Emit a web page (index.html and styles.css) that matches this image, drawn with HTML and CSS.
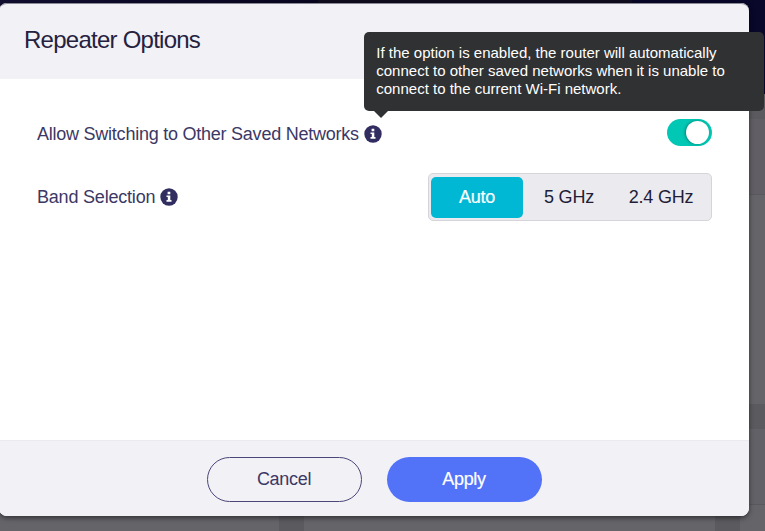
FILE: index.html
```html
<!DOCTYPE html>
<html lang="en">
<head>
<meta charset="utf-8">
<title>Repeater Options</title>
<link rel="stylesheet" href="styles.css">
</head>
<body>
<div class="page">
  <div class="backdrop">
    <div class="topbar"><div class="topbar-panel"></div></div>
    <div class="cards">
      <div class="card card-wide"></div>
      <div class="card card-side"><div class="card-head"></div></div>
      <div class="card"></div>
      <div class="card"></div>
      <div class="card card-last"><div class="card-head"></div></div>
    </div>
  </div>
  <section class="modal" role="dialog">
    <header class="modal-header"><h1>Repeater Options</h1></header>
    <div class="modal-body">
      <div class="row">
        <div class="label"><span class="label-long">Allow Switching to Other Saved Networks</span>
          <span class="info">
            <svg viewBox="0 0 18 18" width="18" height="18"><circle cx="9" cy="9" r="8.7" fill="#312d61"/><path d="M7.6 3.8h2.7v2.5H7.6zM6.5 7.4h3.8v4.7h1.2v1.6h-5v-1.6h1.3V9H6.5z" fill="#fff"/></svg>
            <span class="tooltip">If the option is enabled, the router will automatically<br>connect to other saved networks when it is unable to<br>connect to the current Wi-Fi network.</span>
          </span>
        </div>
        <div class="switch"><div class="knob"></div></div>
      </div>
      <div class="row row-band">
        <div class="label"><span>Band Selection</span>
          <span class="info">
            <svg viewBox="0 0 18 18" width="18" height="18"><circle cx="9" cy="9" r="8.7" fill="#312d61"/><path d="M7.6 3.8h2.7v2.5H7.6zM6.5 7.4h3.8v4.7h1.2v1.6h-5v-1.6h1.3V9H6.5z" fill="#fff"/></svg>
          </span>
        </div>
        <div class="segments">
          <div class="segment active">Auto</div>
          <div class="segment">5 GHz</div>
          <div class="segment">2.4 GHz</div>
        </div>
      </div>
    </div>
    <footer class="modal-footer">
      <button class="btn cancel">Cancel</button>
      <button class="btn apply">Apply</button>
    </footer>
  </section>
</div>
</body>
</html>
```
FILE: styles.css
```css
* { box-sizing: border-box; }
body {
  margin: 0;
  overflow: hidden;
  font-family: "Liberation Sans", Arial, sans-serif;
}
.page {
  position: relative;
  width: 765px;
  height: 531px;
  overflow: hidden;
  background: #5b5a5f;
}
.topbar {
  height: 94px;
  padding: 0 133px 0 318px;
  background: linear-gradient(90deg, #110e30, #07051e 45%, #09072a);
}
.topbar-panel { height: 100%; background: #0f0d1e; }
.cards {
  display: grid;
  grid-template-columns: 279px 411px 40px;
  grid-template-rows: 285px 120px;
  gap: 25px;
  padding-top: 25px;
}
.card { background: #656469; }
.card-wide { grid-column: span 2; }
.card-head { background: #615f65; border-bottom: 1px solid #59585d; height: 76px; }
.card-last .card-head { background: #626167; }
.modal {
  position: absolute;
  left: -1px;
  top: 3px;
  width: 750px;
  height: 513px;
  display: flex;
  flex-direction: column;
  border-radius: 8px;
  background: #fff;
  box-shadow: 0 2px 5px rgba(0, 0, 0, .5);
}
.modal-header {
  height: 76px;
  padding: 22px 25px;
  border-top: 1px solid #8b8a97;
  border-radius: 8px 8px 0 0;
  background: #f2f1f6;
}
h1 {
  margin: 0;
  font-size: 24px;
  line-height: 28px;
  font-weight: 400;
  letter-spacing: -.75px;
  color: #25213f;
}
.modal-body { flex: 1; padding: 38px 37px 0 38px; }
.row {
  display: flex;
  justify-content: space-between;
  align-items: center;
  height: 34px;
  color: #3b3865;
}
.row-band { height: 48px; margin-top: 22px; }
.label { display: flex; align-items: center; gap: 5px; font-size: 18px; line-height: 22px; letter-spacing: -.2px; }
.label-long { letter-spacing: -.24px; }
.info { position: relative; display: flex; }
.tooltip {
  position: absolute;
  z-index: 2;
  left: 0;
  bottom: 32px;
  width: 400px;
  height: 79px;
  padding: 12px 12.5px;
  border-radius: 5px;
  background: #303133;
  color: #fff;
  font-size: 15px;
  line-height: 18px;
  letter-spacing: 0;
  white-space: nowrap;
}
.tooltip::after {
  content: "";
  position: absolute;
  left: 10px;
  top: 100%;
  border: 7px solid transparent;
  border-top-color: #303133;
  border-bottom: 0;
}
.switch {
  display: flex;
  justify-content: flex-end;
  width: 45px;
  height: 27px;
  margin-top: -3px;
  padding: 2px 3px 2px 2px;
  border-radius: 14px;
  background: #00c8b4;
}
.knob { width: 23px; height: 23px; border-radius: 50%; background: #fff; box-shadow: -1px 0 3px rgba(0, 0, 0, .35); }
.segments {
  display: flex;
  width: 284px;
  height: 48px;
  padding: 3px 2px;
  border: 1px solid #d5d4d9;
  border-radius: 5px;
  background: #ebeaef;
}
.segment {
  width: 92px;
  display: flex;
  align-items: center;
  justify-content: center;
  border-radius: 5px;
  font-size: 18px;
  letter-spacing: -.2px;
  color: #211d38;
}
.segment.active { height: 41px; background: #00b7d4; color: #fff; -webkit-text-stroke: .2px #fff; }
.modal-footer {
  display: flex;
  justify-content: center;
  gap: 25px;
  height: 76px;
  padding-top: 16px;
  border-top: 1px solid #ebeaee;
  border-radius: 0 0 8px 8px;
  background: #f2f1f6;
}
.btn {
  width: 155px;
  height: 45px;
  padding: 0;
  border: 0;
  border-radius: 23px;
  font: 18px "Liberation Sans", Arial, sans-serif;
  letter-spacing: -.3px;
}
.cancel { border: 1px solid #4b4778; background: transparent; color: #3b3865; }
.apply { background: #5272f8; color: #fff; -webkit-text-stroke: .2px #fff; }
```
